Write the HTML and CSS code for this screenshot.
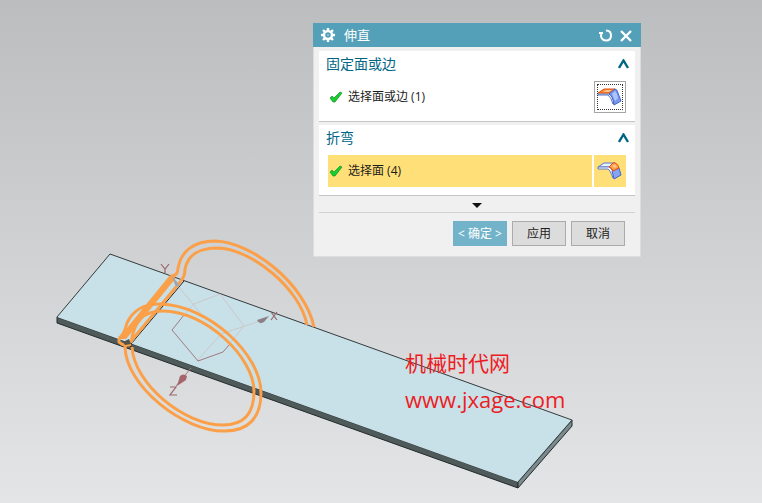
FILE: index.html
```html
<!DOCTYPE html>
<html lang="zh-CN">
<head>
    <meta charset="UTF-8">
    <meta name="viewport" content="width=device-width, initial-scale=1.0">
    <title>伸直</title>
    <link rel="stylesheet" href="styles.css">
</head>
<body>
    <main class="viewport">
        <svg class="model" width="762" height="503" viewBox="0 0 762 503" aria-hidden="true">
            <!-- plate -->
            <path d="M57 317L518 482V488L57 323Z" fill="#4f5a5b" stroke="#252b2b"/>
            <path d="M518 482L572 420V426L518 488Z" fill="#7b8a8d" stroke="#252b2b"/>
            <path d="M110 254L572 420L518 482L57 317Z" fill="#c8e0e7"/>
            <path d="M57 317L110 254L572 420L518 482" fill="none" stroke="#333b3d" stroke-width="1"/>
            <path d="M184 281L131 344V348" fill="none" stroke="#222"/>

            <!-- datum plane and axes -->
            <g fill="none" stroke="#cdc8ca">
                <path d="M184 315L194 304L220 294L244 326L228 346"/>
                <path d="M178 286L202 315M197 361L221 334L260 321"/>
            </g>
            <path d="M184 315L172 330L198 361L223 352L229 345M191 368L176 386" fill="none" stroke="#a17b80"/>
            <path d="M257 320L269 316L264 322Q259 325 257 320Z" fill="#8b8187"/>
            <path d="M177 386L180 376Q183 373 187 376L186 380Z" fill="#a4666b"/>
            <path d="M161 264L165 269L169 264M165 269V273M271 312L277 320M277 312L271 320M170 387H176L170 395H177" fill="none" stroke="#9b6469" stroke-width="1.2"/>

            <!-- highlighted bend edges -->
            <g fill="none" stroke="#fba049" stroke-width="3" stroke-linejoin="round">
                <path d="M171 276Q178 276 178 268C181 251 194 241 215 241C252 242 305 284 314 327"/>
                <path d="M181 281Q185 276 185 269C188 254 199 248 218 248C251 249 300 288 307 325"/>
                <path d="M119 338Q124 335 127 323C133 310 143 304 160 304C208 305 261 354 261 393C261 418 248 431 225 431C184 432 125 386 125 346"/>
                <path d="M131 343C134 321 143 311 163 311C205 311 254 357 254 391C254 414 244 425 223 425C184 425 134 384 132 347"/>
                <path d="M119 338V342Q124 347 131 344M181 281L132 340"/>
            </g>
            <path d="M170 275L176 278L126 339L118 339Z" fill="#fba049"/>
            <path d="M171 275L179 284Q179 287 176 287Z" fill="#a5a6a8"/>
            <path d="M123 342L129 339L131 344L125 345Z" fill="#535449"/>
        </svg>

        <p class="watermark">机械时代网<br><span class="site">www.jxage.com</span></p>

        <form class="dialog" aria-labelledby="dialog-title">
            <header class="titlebar">
                <svg width="16" height="16" viewBox="0 0 16 16" aria-hidden="true">
                    <path d="M8 1V15M1 8H15M3 3L13 13M13 3L3 13" stroke="#fff" stroke-width="2.4"/>
                    <circle cx="8" cy="8" r="4" fill="#55a0b9" stroke="#fff" stroke-width="2.4"/>
                    <circle cx="8" cy="8" r="1" fill="#fff" opacity=".4"/>
                </svg>
                <h1 id="dialog-title">伸直</h1>
                <button type="button" class="tool" aria-label="重置">
                    <svg width="14" height="14" viewBox="0 0 14 14"><path d="M0 5H4M2.500 5C1 9 3 12.500 7 12.500C10 12.500 12 10.500 12 7.500C12 4.500 10 2.500 7 2.500" fill="none" stroke="#fff" stroke-width="2"/></svg>
                </button>
                <button type="button" class="tool" aria-label="关闭">
                    <svg width="14" height="14" viewBox="0 0 14 14"><path d="M2 3L12 13M12 3L2 13" fill="none" stroke="#fff" stroke-width="2.4"/></svg>
                </button>
            </header>

            <div class="content">
                <section class="group">
                    <div class="group-head">
                        <h2>固定面或边</h2>
                        <button type="button" class="tool" aria-label="折叠固定面或边">
                            <svg width="12" height="10" viewBox="0 0 12 10"><path d="M1 9L5.500 1.500L10 9" fill="none" stroke="#006685" stroke-width="2.4"/></svg>
                        </button>
                    </div>
                    <div class="row">
                        <label class="pick-label" for="pick-edge">
                            <svg width="14" height="14" viewBox="0 0 14 14" aria-hidden="true"><path d="M1 8L3 6L5 8L11 2L13 3L6 12L4 12Z" fill="#17ce2c" stroke="#16902a" stroke-width=".7"/></svg>
                            <span>选择面或边 (1)</span>
                        </label>
                        <button type="button" id="pick-edge" class="pick focused" aria-label="选择面或边">
                            <svg width="26" height="20" viewBox="0 0 26 20" aria-hidden="true">
                                <path d="M1 7V8H11Q14 10 16 17L17 12L13 7Z" fill="#eef5ff" stroke="#5878c7"/>
                                <path d="M1 6L7 2H18L12 6Z" fill="#f98b32" stroke="#dc5314"/>
                                <path d="M6 5L9 3H15L12 5Z" fill="#ffc184"/>
                                <path d="M12 7L18 2Q20 2 21 6L24 14L17 18Q16 9 12 7Z" fill="#7898ee" stroke="#4565c5"/>
                                <path d="M15 7L18 4Q20 6 21 11L18 14Z" fill="#adc4ff"/>
                            </svg>
                        </button>
                    </div>
                </section>

                <section class="group">
                    <div class="group-head">
                        <h2>折弯</h2>
                        <button type="button" class="tool" aria-label="折叠折弯">
                            <svg width="12" height="10" viewBox="0 0 12 10"><path d="M1 9L5.500 1.500L10 9" fill="none" stroke="#006685" stroke-width="2.4"/></svg>
                        </button>
                    </div>
                    <div class="row active">
                        <label class="pick-label" for="pick-face">
                            <svg width="14" height="14" viewBox="0 0 14 14" aria-hidden="true"><path d="M1 8L3 6L5 8L11 2L13 3L6 12L4 12Z" fill="#17ce2c" stroke="#16902a" stroke-width=".7"/></svg>
                            <span>选择面 (4)</span>
                        </label>
                        <button type="button" id="pick-face" class="pick" aria-label="选择面">
                            <svg width="26" height="20" viewBox="0 0 26 20" aria-hidden="true">
                                <path d="M1 6L7 2H18L12 6Z" fill="#e6f5ff" stroke="#5878c7"/>
                                <path d="M1 6V8H11Q13 9 16 17L17 12L13 6Z" fill="#fff" stroke="#5878c7"/>
                                <path d="M15 10L22 7L24 14L17 18Z" fill="#85a4f4" stroke="#4565c5"/>
                                <path d="M12 6L16 2Q20 1 22 7L16 10Q15 7 12 6Z" fill="#ff9f43" stroke="#e44b12"/>
                                <path d="M15 5L18 3L20 6L17 7Z" fill="#ffc184"/>
                            </svg>
                        </button>
                    </div>
                </section>

                <button type="button" class="more" aria-label="更多">
                    <svg width="10" height="5" viewBox="0 0 10 5"><path d="M0 0H10L5 5Z" fill="#111"/></svg>
                </button>

                <footer class="actions">
                    <button type="submit" class="btn primary">&lt; 确定 &gt;</button>
                    <button type="button" class="btn">应用</button>
                    <button type="button" class="btn">取消</button>
                </footer>
            </div>
        </form>
    </main>
</body>
</html>
```
FILE: styles.css
```css
* { box-sizing: border-box; }
body { margin: 0; font-family: "Open Sans", "Noto Sans CJK SC", sans-serif; font-size: 12px; color: #1c1c1c; }
button { font: inherit; color: inherit; padding: 0; }
svg { display: block; flex: none; }
h1, h2, p { margin: 0; font-weight: normal; }

.viewport { position: relative; min-height: 100vh; overflow: hidden; background: linear-gradient(#bcbdbf, #e4e5e7); }
.watermark { position: absolute; left: 405px; top: 345px; font-size: 21px; line-height: 36px; color: #ed1c24; }
.site { font-size: 22px; }

.dialog { position: absolute; left: 313px; top: 23px; width: 328px; background: #f0f0f0; border: 1px solid #dcdddd; border-top: 0; }
.titlebar { display: flex; align-items: center; height: 24px; margin: 0 -1px; padding: 0 8px 0 7px; gap: 6px; background: #55a0b9; color: #fff; }
.titlebar h1 { flex: 1; padding-left: 2px; font-size: 13px; line-height: 24px; }
.tool { display: flex; align-items: center; border: 0; background: none; }

.content { padding: 4px 5px 10px; }
.group { height: 71px; margin-bottom: 3px; padding: 0 9px; background: #fff; border-bottom: 1px solid #c6c6c8; }
.group-head { display: flex; align-items: center; justify-content: space-between; height: 26px; margin: 0 -4px 0 -2px; }
.group-head h2 { font-size: 14px; line-height: 26px; color: #006685; }
.row { display: flex; gap: 2px; height: 32px; margin-top: 4px; }
.pick-label { display: flex; flex: 1; align-items: center; gap: 5px; padding-left: 1px; }
.pick-label span { padding-bottom: 2px; }
.pick { display: flex; align-items: center; justify-content: center; width: 32px; border: 0; background: none; }
.focused { border: 1px solid #a5a5a5; outline: 1px dotted #333; outline-offset: -4px; }
.active .pick-label, .active .pick { background: #ffdf78; }

.more { display: flex; align-items: center; justify-content: center; width: 100%; height: 14px; border: 0; border-bottom: 1px solid #d1d1d2; background: none; }
.actions { display: flex; justify-content: flex-end; gap: 5px; padding: 8px 10px 0 0; }
.btn { width: 54px; height: 25px; padding-bottom: 2px; border: 1px solid #ababac; background: #dcdcdc; white-space: nowrap; }
.primary { border-color: #73b3ca; background: #73b3ca; color: #fff; }
```
